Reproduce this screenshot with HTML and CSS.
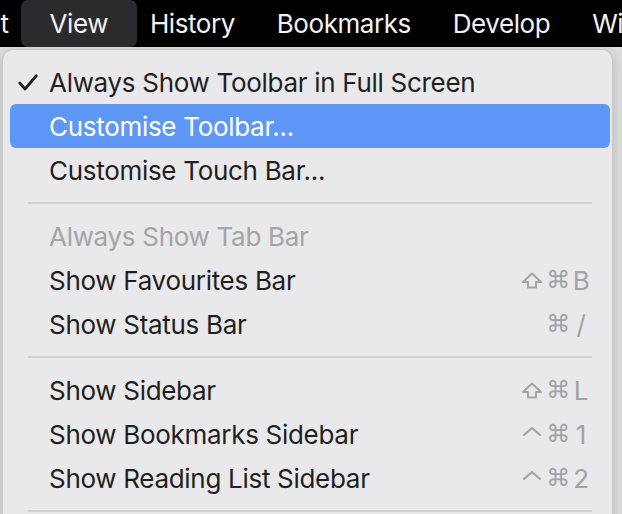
FILE: index.html
```html
<!DOCTYPE html>
<html lang="en">
<head>
  <meta charset="UTF-8" />
  <meta name="viewport" content="width=device-width, initial-scale=1.0">
  <title>View menu</title>
  <link rel="stylesheet" href="styles.css">
</head>
<body>
  <div class="menubar">
    <span class="bar-item cut">Edit</span>
    <span class="bar-item open">View</span>
    <span class="bar-item">History</span>
    <span class="bar-item">Bookmarks</span>
    <span class="bar-item">Develop</span>
    <span class="bar-item">Window</span>
  </div>

  <div class="stage">
    <div class="menu">
      <div class="item">
        <span class="mark">
          <svg width="20" height="17" viewBox="0 0 20 17"><polyline points="1.8,9 7,15 18.2,1.8" fill="none" stroke="#1d1d1f" stroke-width="2.8" stroke-linecap="round" stroke-linejoin="round"/></svg>
        </span>
        <span class="label">Always Show Toolbar in Full Screen</span>
      </div>
      <div class="item selected">
        <span class="mark"></span>
        <span class="label">Customise Toolbar...</span>
      </div>
      <div class="item">
        <span class="mark"></span>
        <span class="label">Customise Touch Bar...</span>
      </div>

      <div class="sep"></div>

      <div class="item disabled">
        <span class="mark"></span>
        <span class="label">Always Show Tab Bar</span>
      </div>
      <div class="item">
        <span class="mark"></span>
        <span class="label">Show Favourites Bar</span>
        <span class="keys">
          <span class="mod"><svg width="22" height="17" viewBox="0 0 22 17"><path d="M11 1.5 L20 10 H15 V15.5 H7 V10 H2 Z" fill="none" stroke="currentColor" stroke-width="2" stroke-linejoin="round"/></svg></span>
          <span class="cmd">⌘</span>
          <span class="key">B</span>
        </span>
      </div>
      <div class="item">
        <span class="mark"></span>
        <span class="label">Show Status Bar</span>
        <span class="keys">
          <span class="mod"></span>
          <span class="cmd">⌘</span>
          <span class="key">/</span>
        </span>
      </div>

      <div class="sep"></div>

      <div class="item">
        <span class="mark"></span>
        <span class="label">Show Sidebar</span>
        <span class="keys">
          <span class="mod"><svg width="22" height="17" viewBox="0 0 22 17"><path d="M11 1.5 L20 10 H15 V15.5 H7 V10 H2 Z" fill="none" stroke="currentColor" stroke-width="2" stroke-linejoin="round"/></svg></span>
          <span class="cmd">⌘</span>
          <span class="key">L</span>
        </span>
      </div>
      <div class="item">
        <span class="mark"></span>
        <span class="label">Show Bookmarks Sidebar</span>
        <span class="keys">
          <span class="mod"><svg width="20" height="17" viewBox="0 0 20 17"><polyline points="2,9 10,2 18,9" fill="none" stroke="currentColor" stroke-width="2.2" stroke-linecap="round" stroke-linejoin="round"/></svg></span>
          <span class="cmd">⌘</span>
          <span class="key">1</span>
        </span>
      </div>
      <div class="item">
        <span class="mark"></span>
        <span class="label">Show Reading List Sidebar</span>
        <span class="keys">
          <span class="mod"><svg width="20" height="17" viewBox="0 0 20 17"><polyline points="2,9 10,2 18,9" fill="none" stroke="currentColor" stroke-width="2.2" stroke-linecap="round" stroke-linejoin="round"/></svg></span>
          <span class="cmd">⌘</span>
          <span class="key">2</span>
        </span>
      </div>

      <div class="sep"></div>
    </div>
  </div>
</body>
</html>
```

FILE: styles.css
```css
* {
  box-sizing: border-box;
}
html, body {
  margin: 0;
  height: 100%;
}
body {
  font-family: Inter, "Liberation Sans", sans-serif;
  background-color: #dedddf;
  overflow: hidden;
}
.menubar {
  display: flex;
  height: 47px;
  background: #000;
  color: #f2f2f2;
  font-size: 26px;
  letter-spacing: -0.45px;
  white-space: nowrap;
  overflow: hidden;
}
.bar-item {
  display: flex;
  align-items: center;
  padding: 0 21px;
}
.bar-item.cut {
  margin-left: -57px;
}
.bar-item.open {
  padding: 0 29px;
  margin: 0 -8px 0 -9px;
  background: #2b2b2d;
  border-radius: 7px;
}
.stage {
  padding: 2px 9px 0 2px;
}
.menu {
  width: 611px;
  height: 480px;
  background: #e9e8ea;
  border: 1px solid #c9c8cb;
  border-bottom: none;
  border-radius: 11px 11px 0 0;
  padding-top: 10px;
  box-shadow: 0 4px 14px rgba(0, 0, 0, 0.18);
  color: #1f1f21;
  font-size: 26px;
  letter-spacing: -0.3px;
}
.item {
  display: flex;
  align-items: center;
  height: 44px;
  margin: 0 2px 0 7px;
  padding: 0 20px 0 8px;
  border-radius: 6px;
}
.mark {
  width: 31px;
  display: flex;
  align-items: center;
}
.label {
  flex: 1;
  white-space: nowrap;
}
.selected {
  background: #5e97f6;
  color: #fff;
}
.disabled {
  color: #a5a4a7;
}
.keys {
  display: flex;
  align-items: center;
  color: #a3a2a5;
}
.keys .mod {
  width: 24px;
  display: flex;
  justify-content: center;
}
.keys .cmd {
  width: 28px;
  text-align: center;
  font-family: "DejaVu Sans", sans-serif;
  font-size: 24px;
}
.keys .key {
  width: 18px;
  text-align: center;
}
.sep {
  height: 22px;
  display: flex;
  align-items: center;
  margin: 0 20px 0 25px;
}
.sep::before {
  content: "";
  flex: 1;
  height: 2px;
  background: #d0cfd2;
}
```
